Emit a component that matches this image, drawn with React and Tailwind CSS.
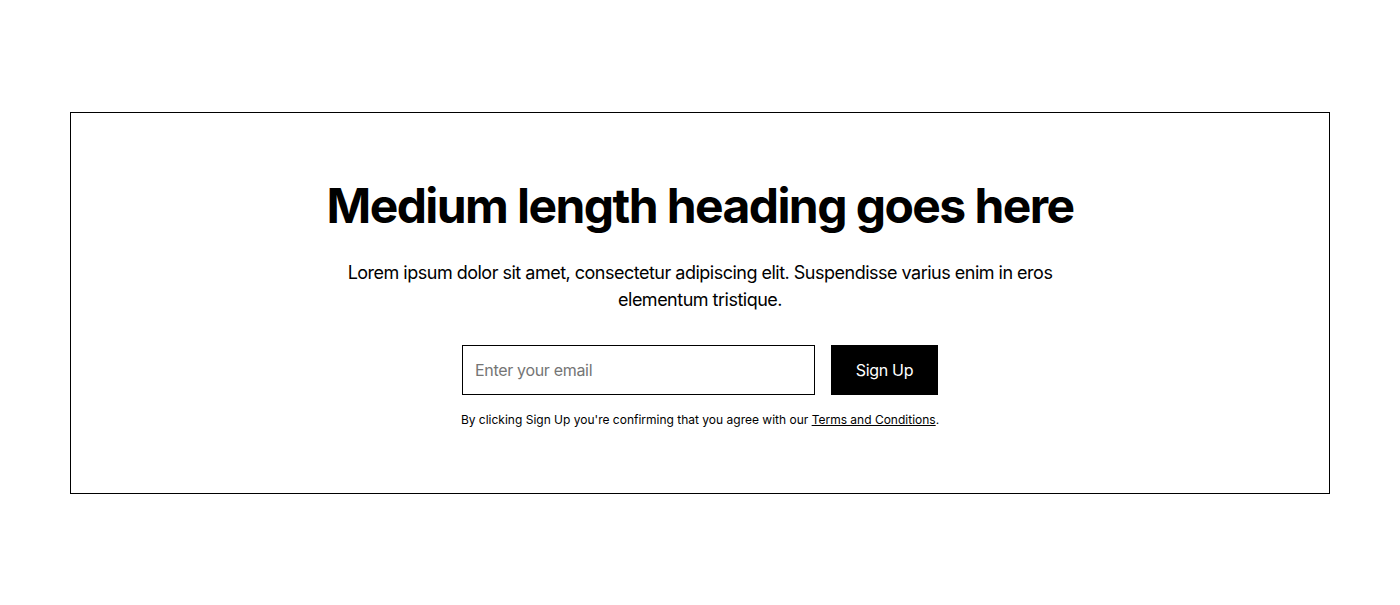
export default function App() {
  return (
    <section
      className="px-[5%] py-28 bg-white text-black"
      style={{ fontFamily: "Inter, 'Noto Sans', sans-serif" }}
    >
      <div className="border border-black p-16 flex flex-col items-center text-center">
        <div className="w-full flex flex-col items-center">
          <h2 className="mb-6 text-5xl font-bold leading-[1.2] tracking-[-0.033em] whitespace-nowrap">
            Medium length heading goes here
          </h2>
          <p className="max-w-[720px] text-lg leading-[1.5] tracking-[-0.028em]">
            Lorem ipsum dolor sit amet, consectetur adipiscing elit. Suspendisse varius enim in eros elementum tristique.
          </p>
          <div className="mt-8 w-[476px] flex flex-col items-center">
            <form className="flex gap-4 w-full" onSubmit={(e) => e.preventDefault()}>
              <input
                type="email"
                placeholder="Enter your email"
                className="h-[50px] w-[353px] border border-black px-3 text-base tracking-[-0.02em] text-black placeholder:text-[#757575] outline-none bg-white"
              />
              <button
                type="submit"
                className="h-[50px] w-[107px] bg-black text-white border border-black text-base tracking-[-0.02em]"
              >
                Sign Up
              </button>
            </form>
            <p className="mt-4 text-xs leading-[1.5] whitespace-nowrap">
              By clicking Sign Up you're confirming that you agree with our{" "}
              <a href="#" className="underline">Terms and Conditions</a>.
            </p>
          </div>
        </div>
      </div>
    </section>
  );
}
